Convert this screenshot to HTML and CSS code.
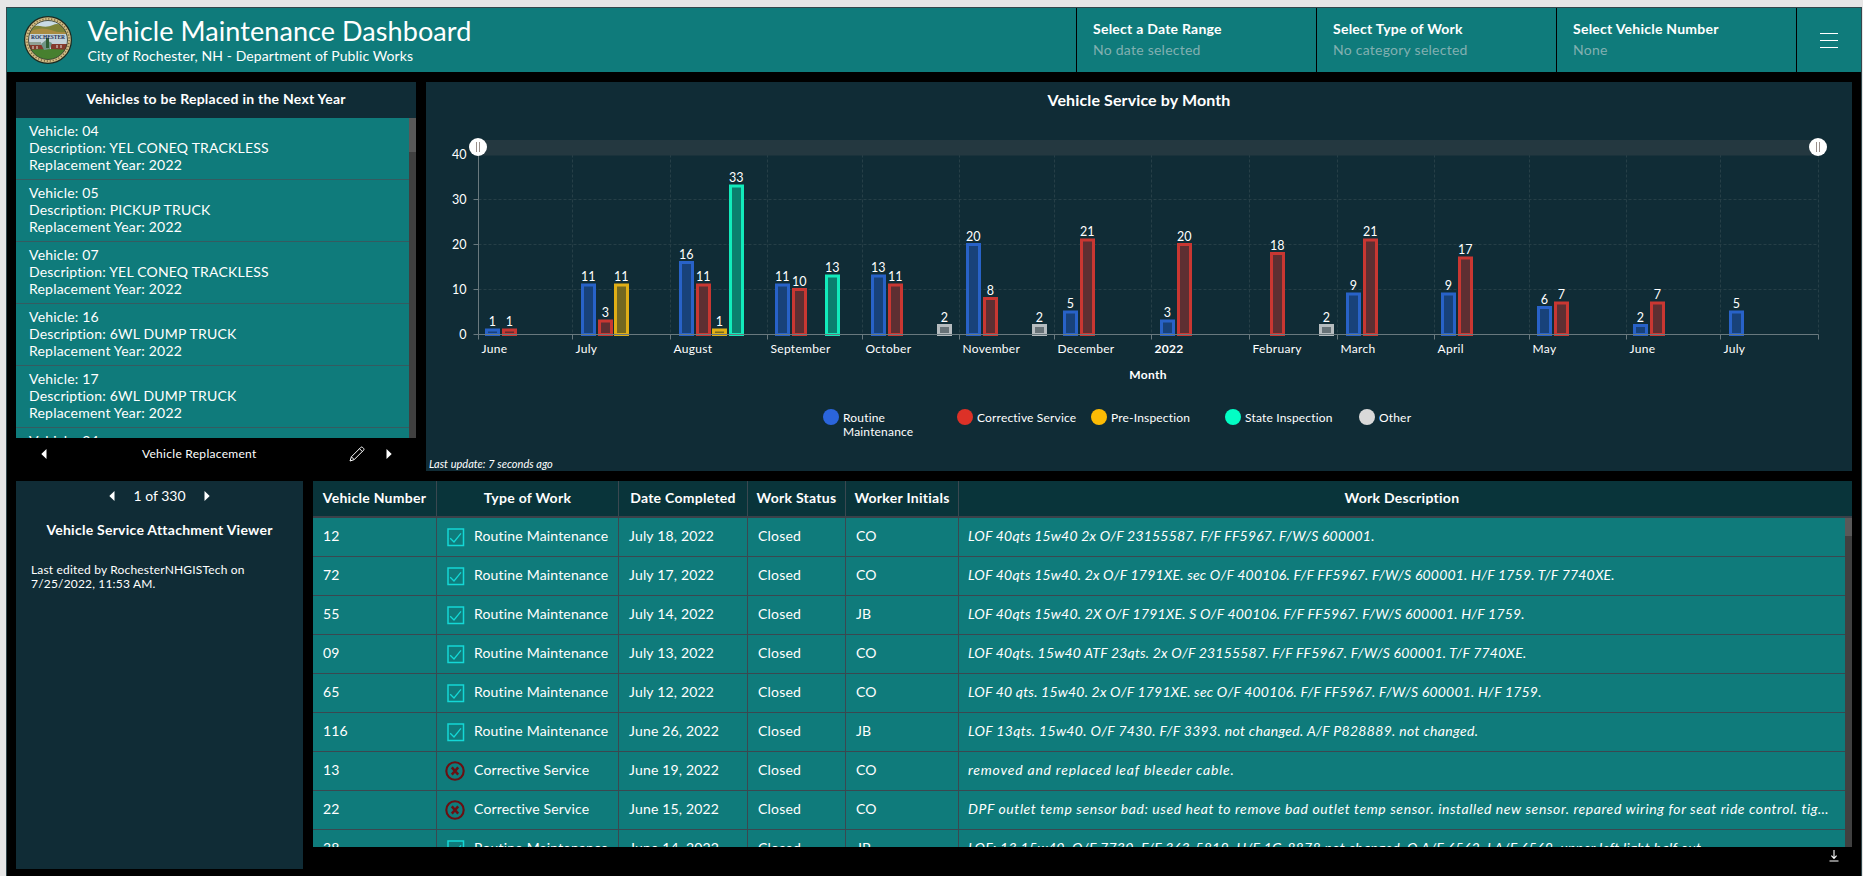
FILE: index.html
```html
<!DOCTYPE html>
<html lang="en">
<head>
<meta charset="utf-8">
<title>Vehicle Maintenance Dashboard</title>
<link rel="stylesheet" href="styles.css">
</head>
<body>
<svg class="defs" aria-hidden="true">
  <symbol id="check" viewBox="0 0 18 19"><rect x="1" y="1" width="15.5" height="16.5" fill="none" stroke="#14d8d6" stroke-width="1.5"/><path d="M3.2 10.2 7 14 14 5.4" fill="none" stroke="#14d8d6" stroke-width="1.3"/></symbol>
  <symbol id="cross" viewBox="0 0 20 20"><circle cx="10" cy="10" r="8.7" fill="none" stroke="#6a0f12" stroke-width="2.1"/><path d="M6.8 6.4 13.2 13.6M13.2 6.4 6.8 13.6" stroke="#6a0f12" stroke-width="2.5"/></symbol>
  <symbol id="left" viewBox="0 0 6 10"><path d="M5.5 0V10L.3 5Z" fill="#fff"/></symbol>
  <symbol id="right" viewBox="0 0 6 10"><path d="M.5 0V10L5.7 5Z" fill="#fff"/></symbol>
</svg>
<div class="dashboard">
  <header class="topbar">
    <svg class="seal" viewBox="0 0 50 50">
      <defs><clipPath id="scene"><circle cx="25" cy="25" r="19.5"/></clipPath></defs>
      <circle cx="25" cy="25" r="24" fill="#1d2a20"/>
      <circle cx="25" cy="25" r="22.8" fill="#d2bd85"/>
      <circle cx="25" cy="25" r="21.1" fill="none" stroke="#7d6b42" stroke-width="1.6" stroke-dasharray="1.2 1.8"/>
      <g clip-path="url(#scene)">
        <path d="M5 5H45V45H5Z" fill="#c9dbe4"/>
        <path d="M5 14Q10 10 17 11Q24 13 30 10T45 14V22H5Z" fill="#7f8438"/>
        <path d="M5 17Q18 11 28 15T45 16V21H5Z" fill="#a98b41"/>
        <path d="M5 19H45V30H5Z" fill="#c3d2d8"/>
        <path d="M6 27H18V31H6Z" fill="#8fa093"/>
        <path d="M5 30H22V36H5ZM28 29H45V36H28Z" fill="#843a2c"/>
        <path d="M5 35Q25 33 45 35V46H5Z" fill="#47802f"/>
        <path d="M18 29 23 25 29 28 27 34 21 35Z" fill="#6f9484"/>
        <path d="M23 23H26V33H23Z" fill="#2f5d33"/>
        <path d="M10 31V34M14 31V34M34 30V33M38 30V33" stroke="#dfe4de"/>
      </g>
      <circle cx="25" cy="25" r="19.5" fill="none" stroke="#2b3324" stroke-width=".8"/>
      <text x="25" y="23.8" text-anchor="middle" textLength="34" lengthAdjust="spacingAndGlyphs" class="seal-text">ROCHESTER</text>
    </svg>
    <div class="heading">
      <h1>Vehicle Maintenance Dashboard</h1>
      <p>City of Rochester, NH - Department of Public Works</p>
    </div>
    <div class="selector"><b>Select a Date Range</b><span>No date selected</span></div>
    <div class="selector"><b>Select Type of Work</b><span>No category selected</span></div>
    <div class="selector"><b>Select Vehicle Number</b><span>None</span></div>
    <div class="menu"><i></i><i></i><i></i></div>
  </header>

  <div class="row upper">
    <section class="replace">
      <div class="panel">
        <h2>Vehicles to be Replaced in the Next Year</h2>
        <div class="scroll">
          <ul>
            <li>Vehicle: 04<br>Description: YEL CONEQ TRACKLESS<br>Replacement Year: 2022</li>
            <li>Vehicle: 05<br>Description: PICKUP TRUCK<br>Replacement Year: 2022</li>
            <li>Vehicle: 07<br>Description: YEL CONEQ TRACKLESS<br>Replacement Year: 2022</li>
            <li>Vehicle: 16<br>Description: 6WL DUMP TRUCK<br>Replacement Year: 2022</li>
            <li>Vehicle: 17<br>Description: 6WL DUMP TRUCK<br>Replacement Year: 2022</li>
            <li>Vehicle: 24</li>
          </ul>
          <div class="bar"><div class="thumb"></div></div>
        </div>
      </div>
      <nav class="tabs">
        <svg class="arrow"><use href="#left"/></svg>
        <span>Vehicle Replacement</span>
        <svg class="pencil" viewBox="0 0 16 16"><path d="M1 15 2.4 10.8 11.8 1.4Q12.6.6 13.6 1.4L14.6 2.4Q15.4 3.4 14.6 4.2L5.2 13.6ZM2.4 10.8 5.2 13.6M10.5 2.7 13.3 5.5" fill="none" stroke="#fff" stroke-width="1"/></svg>
        <svg class="arrow"><use href="#right"/></svg>
      </nav>
    </section>
    <section class="chart">
      <h2>Vehicle Service by Month</h2>
      <svg id="plot" viewBox="426 118 1426 270" width="1426" height="270"></svg>
      <div class="legend">
        <div><i class="routine"></i>Routine Maintenance</div>
        <div><i class="corrective"></i>Corrective Service</div>
        <div><i class="pre"></i>Pre-Inspection</div>
        <div><i class="state"></i>State Inspection</div>
        <div><i class="other"></i>Other</div>
      </div>
      <p class="updated">Last update: 7 seconds ago</p>
    </section>
  </div>

  <div class="row lower">
    <section class="viewer">
      <div class="pager"><svg class="arrow"><use href="#left"/></svg><span>1 of 330</span><svg class="arrow"><use href="#right"/></svg></div>
      <h2>Vehicle Service Attachment Viewer</h2>
      <p>Last edited by RochesterNHGISTech on 7/25/2022, 11:53 AM.</p>
    </section>
    <section class="log">
      <div class="thead grid"><div>Vehicle Number</div><div>Type of Work</div><div>Date Completed</div><div>Work Status</div><div>Worker Initials</div><div>Work Description</div></div>
      <div class="scroll">
        <div class="tbody">
          <div class="grid"><div>12</div><div><svg class="check"><use href="#check"/></svg>Routine Maintenance</div><div>July 18, 2022</div><div>Closed</div><div>CO</div><div class="desc">LOF 40qts 15w40 2x O/F 23155587. F/F FF5967. F/W/S 600001.</div></div>
          <div class="grid"><div>72</div><div><svg class="check"><use href="#check"/></svg>Routine Maintenance</div><div>July 17, 2022</div><div>Closed</div><div>CO</div><div class="desc">LOF 40qts 15w40. 2x O/F 1791XE. sec O/F 400106. F/F FF5967. F/W/S 600001. H/F 1759. T/F 7740XE.</div></div>
          <div class="grid"><div>55</div><div><svg class="check"><use href="#check"/></svg>Routine Maintenance</div><div>July 14, 2022</div><div>Closed</div><div>JB</div><div class="desc">LOF 40qts 15w40. 2X O/F 1791XE. S O/F 400106. F/F FF5967. F/W/S 600001. H/F 1759.</div></div>
          <div class="grid"><div>09</div><div><svg class="check"><use href="#check"/></svg>Routine Maintenance</div><div>July 13, 2022</div><div>Closed</div><div>CO</div><div class="desc">LOF 40qts. 15w40 ATF 23qts. 2x O/F 23155587. F/F FF5967. F/W/S 600001. T/F 7740XE.</div></div>
          <div class="grid"><div>65</div><div><svg class="check"><use href="#check"/></svg>Routine Maintenance</div><div>July 12, 2022</div><div>Closed</div><div>CO</div><div class="desc">LOF 40 qts. 15w40. 2x O/F 1791XE. sec O/F 400106. F/F FF5967. F/W/S 600001. H/F 1759.</div></div>
          <div class="grid"><div>116</div><div><svg class="check"><use href="#check"/></svg>Routine Maintenance</div><div>June 26, 2022</div><div>Closed</div><div>JB</div><div class="desc mixed">LOF 13qts. 15w40. O/F 7430. F/F 3393. not changed. A/F P828889. not changed.</div></div>
          <div class="grid"><div>13</div><div><svg class="cross"><use href="#cross"/></svg>Corrective Service</div><div>June 19, 2022</div><div>Closed</div><div>CO</div><div class="desc prose short">removed and replaced leaf bleeder cable.</div></div>
          <div class="grid"><div>22</div><div><svg class="cross"><use href="#cross"/></svg>Corrective Service</div><div>June 15, 2022</div><div>Closed</div><div>CO</div><div class="desc prose">DPF outlet temp sensor bad: used heat to remove bad outlet temp sensor. installed new sensor. repared wiring for seat ride control. tig…</div></div>
          <div class="grid"><div>38</div><div><svg class="check"><use href="#check"/></svg>Routine Maintenance</div><div>June 14, 2022</div><div>Closed</div><div>JB</div><div class="desc mixed">LOF: 13 15w40. O/F 7730. F/F 363-5819. H/F 1G-8878 not changed. O A/F 6562. I A/F 6569. upper left light half out.</div></div>
        </div>
        <div class="bar"><div class="thumb"></div></div>
      </div>
      <footer><svg viewBox="0 0 10 12"><path d="M5 0V8M2.4 5.6 5 8.4 7.6 5.6M.5 11H9.5" fill="none" stroke="#fff" stroke-width="1.1"/></svg></footer>
    </section>
  </div>
</div>
<script src="chart.js"></script>
</body>
</html>
```
FILE: chart.js
```js
// Draws the monthly service chart: axes, grid, range slider and bars.
const plot = document.getElementById('plot');
const LEFT = 478.5, RIGHT = 1818.5, BASE = 334.5, TOP = 154.5, UNIT = 4.5;
const COLORS = { routine: '#2862c8', corrective: '#c93732', pre: '#e0ae16', state: '#12ebbb', other: '#b6bcbf' };
const FILLS = { routine: '#18427a', corrective: '#5e2f32', pre: '#746820', state: '#0b7f6e', other: '#677277' };
const MONTHS = [
  [478.5, 'June', [[485, 1, 'routine'], [502, 1, 'corrective']]],
  [572.5, 'July', [[581, 11, 'routine'], [598, 3, 'corrective'], [614, 11, 'pre']]],
  [670.5, 'August', [[679, 16, 'routine'], [696, 11, 'corrective'], [712, 1, 'pre'], [729, 33, 'state']]],
  [767.5, 'September', [[775, 11, 'routine'], [792, 10, 'corrective'], [825, 13, 'state']]],
  [862.5, 'October', [[871, 13, 'routine'], [888, 11, 'corrective'], [937, 2, 'other']]],
  [959.5, 'November', [[966, 20, 'routine'], [983, 8, 'corrective'], [1032, 2, 'other']]],
  [1054.5, 'December', [[1063, 5, 'routine'], [1080, 21, 'corrective']]],
  [1151.5, '2022', [[1160, 3, 'routine'], [1177, 20, 'corrective']]],
  [1249.5, 'February', [[1270, 18, 'corrective'], [1319, 2, 'other']]],
  [1337.5, 'March', [[1346, 9, 'routine'], [1363, 21, 'corrective']]],
  [1434.5, 'April', [[1441, 9, 'routine'], [1458, 17, 'corrective']]],
  [1529.5, 'May', [[1537, 6, 'routine'], [1554, 7, 'corrective']]],
  [1626.5, 'June', [[1633, 2, 'routine'], [1650, 7, 'corrective']]],
  [1720.5, 'July', [[1729, 5, 'routine']]],
];
let out = '';
const line = (x1, y1, x2, y2, cls) => { out += `<path d="M${x1} ${y1}L${x2} ${y2}" class="${cls}"/>`; };
const text = (x, y, s, cls) => { out += `<text x="${x}" y="${y}" class="${cls}">${s}</text>`; };

for (const v of [0, 10, 20, 30, 40]) {
  const y = Math.floor(BASE - v * UNIT) + 0.5;
  if (v) line(LEFT, y, RIGHT, y, 'gridline');
  if (v < 40) line(LEFT - 5, y, LEFT, y, 'axis');
  text(LEFT - 12, y + 4.5, v, 'value end');
}
for (const x of [...MONTHS.map(m => m[0]).slice(1), RIGHT]) {
  line(x, TOP, x, BASE, 'gridline');
  line(x, BASE, x, BASE + 5, 'axis');
}
line(LEFT, TOP, LEFT, BASE + 5, 'axis');
for (const [x, label, bars] of MONTHS) {
  text(x + 3, 352.8, label, label === '2022' ? 'label strong' : 'label');
  for (const [bx, v, kind] of bars) {
    const h = v * UNIT, y = BASE - h;
    out += `<rect x="${bx + 1.5}" y="${y}" width="12" height="${h}" fill="${FILLS[kind]}" stroke="${COLORS[kind]}" stroke-width="3"/>`;
    text(bx + 7.3, y - 4, v, 'value mid');
  }
}
line(LEFT, BASE, RIGHT, BASE, 'axis');
out += `<rect x="${LEFT}" y="140" width="${RIGHT - LEFT}" height="15.5" fill="#243840"/>`;
for (const x of [LEFT - 0.5, RIGHT - 0.5]) {
  out += `<circle cx="${x}" cy="147" r="9" fill="#fff"/><path d="M${x - 1.5} 142V152M${x + 1.5} 142V152" stroke="#9a8f8a"/>`;
}
text(1148, 378.6, 'Month', 'mid strong');
plot.innerHTML = out;
```
FILE: styles.css
```css
* { box-sizing: border-box; margin: 0; padding: 0; }
body {
  width: 1863px; height: 876px; overflow: hidden;
  background: #e6e6e6;
  color: #fff;
  font: 14px/17px Lato, "Open Sans", sans-serif;
  padding: 7px 1px 0 6px;
}
.defs { display: none; }
h1, h2 { font-weight: 700; }
h2 { font-size: 14px; letter-spacing: .25px; text-align: center; }

.dashboard {
  height: 869px; background: #000;
  border: solid #33474c; border-width: 1px 1px 0 1px;
  display: flex; flex-direction: column;
}
.topbar { height: 64px; flex: none; display: flex; background: #0f7b7b; }
.seal { width: 50px; height: 50px; margin: 7px 0 0 15.5px; flex: none; }
.seal-text { font: 700 6.5px "Liberation Serif", serif; fill: #1b2f55; }
.heading { flex: 1; padding: 4px 0 0 15px; }
.heading h1 { font-weight: 400; font-size: 27px; line-height: 38px; letter-spacing: .07px; }
.heading p { letter-spacing: .1px; line-height: 17px; margin-top: -3px; }
.selector {
  width: 240px; padding: 12px 16px; border-left: 1px solid #000;
  display: flex; flex-direction: column; gap: 3px; letter-spacing: .25px; line-height: 18px;
}
.selector span { color: #82b0b1; }
.menu {
  width: 65px; border-left: 1px solid #000; padding-left: 23px;
  display: flex; flex-direction: column; justify-content: center; gap: 6px;
}
.menu i { width: 18px; height: 1px; background: #fff; }

.row { display: flex; gap: 10px; padding: 0 9px; }
.upper { margin-top: 10px; height: 389px; flex: none; }
.lower { margin-top: 10px; flex: 1; }

.replace { width: 400px; flex: none; display: flex; flex-direction: column; }
.panel { height: 356px; background: #102c36; }
.panel h2 { height: 36px; line-height: 34px; }
.scroll { display: flex; overflow: hidden; }
.panel .scroll { height: 320px; }
.bar { width: 7px; flex: none; background: #404040; }
.thumb { height: 34px; background: #595959; }
.panel ul { flex: 1; list-style: none; background: #0f7b7b; }
.panel li { height: 62px; padding: 4px 13px 0; border-bottom: 1px solid #355b60; letter-spacing: .2px; }
.tabs { height: 33px; display: flex; align-items: center; padding: 0 24px 2px 25px; font-size: 12px; letter-spacing: .28px; }
.tabs span { flex: 1; padding-left: 95px; }
.arrow { width: 6px; height: 10px; flex: none; }
.pencil { width: 16px; height: 16px; margin-right: 21px; }

.chart { width: 1426px; flex: none; background: #102c36; display: flex; flex-direction: column; }
.chart h2 { height: 36px; line-height: 35px; font-size: 16px; letter-spacing: .12px; }
#plot { display: block; flex: none; font-size: 12px; letter-spacing: .3px; }
#plot text { fill: #fff; }
#plot .value { font-size: 12.5px; letter-spacing: 0; }
#plot .mid { text-anchor: middle; }
#plot .end { text-anchor: end; }
#plot .strong { font-weight: 700; }
.axis { stroke: #69797e; }
.gridline { stroke: #263f47; stroke-dasharray: 3 2; }
.legend { display: flex; margin: 21px 0 0 397px; font-size: 12px; line-height: 14px; letter-spacing: .18px; }
.legend div { width: 134px; padding: 2px 22px 0 20px; position: relative; }
.legend div:nth-child(2) { white-space: nowrap; }
.legend i { position: absolute; left: 0; top: 0; width: 16px; height: 16px; border-radius: 50%; }
.routine { background: #2b65dc; }
.corrective { background: #dc3127; }
.pre { background: #fcbb04; }
.state { background: #03fdc4; }
.other { background: #d9d9d9; }
.updated { margin-top: auto; padding: 0 0 0 3px; font: italic 11px/14px Lato, sans-serif; letter-spacing: .02px; }

.viewer { width: 287px; flex: none; height: 388px; background: #102c36; }
.pager { display: flex; justify-content: center; align-items: center; gap: 18px; padding-top: 6px; }
.viewer h2 { margin-top: 17px; }
.viewer p { margin: 25px 15px 0; font-size: 12px; line-height: 14px; letter-spacing: .18px; width: 250px; }

.log { width: 1539px; flex: none; display: flex; flex-direction: column; }
.grid { display: grid; grid-template-columns: 124px 182px 129px 98px 113px 1fr; }
.grid > div { border-right: 1px solid #3a4850; padding-left: 10px; white-space: nowrap; overflow: hidden; }
.grid > div:nth-child(2) { padding-left: 9px; }
.grid > div:last-child { border-right: 0; }
.thead { height: 37px; background: #09343a; border-bottom: 2px solid #3a4149; font-weight: 700; letter-spacing: .28px; line-height: 34px; }
.thead > div, .thead > div:nth-child(2) { padding: 0; text-align: center; }
.thead > div:last-child { padding-right: 7px; }
.log .scroll { height: 329px; }
.log .thumb { height: 18px; }
.tbody { flex: 1; background: #0f7b7b; }
.tbody .grid { height: 39px; border-bottom: 1px solid #3a4850; line-height: 36px; letter-spacing: .18px; }
.grid .desc { font-style: italic; letter-spacing: .19px; padding-left: 9px; }
.grid .mixed { letter-spacing: .32px; }
.grid .prose { letter-spacing: .58px; }
.grid .short { letter-spacing: .78px; }
.check, .cross { vertical-align: middle; }
.check { width: 18px; height: 19px; margin: 0 9px 0 1px; }
.cross { width: 20px; height: 20px; margin: 0 9px 0 -1px; }
.log footer { padding: 3px 13px; text-align: right; line-height: 0; }
.log footer svg { width: 10px; height: 12px; }
```
